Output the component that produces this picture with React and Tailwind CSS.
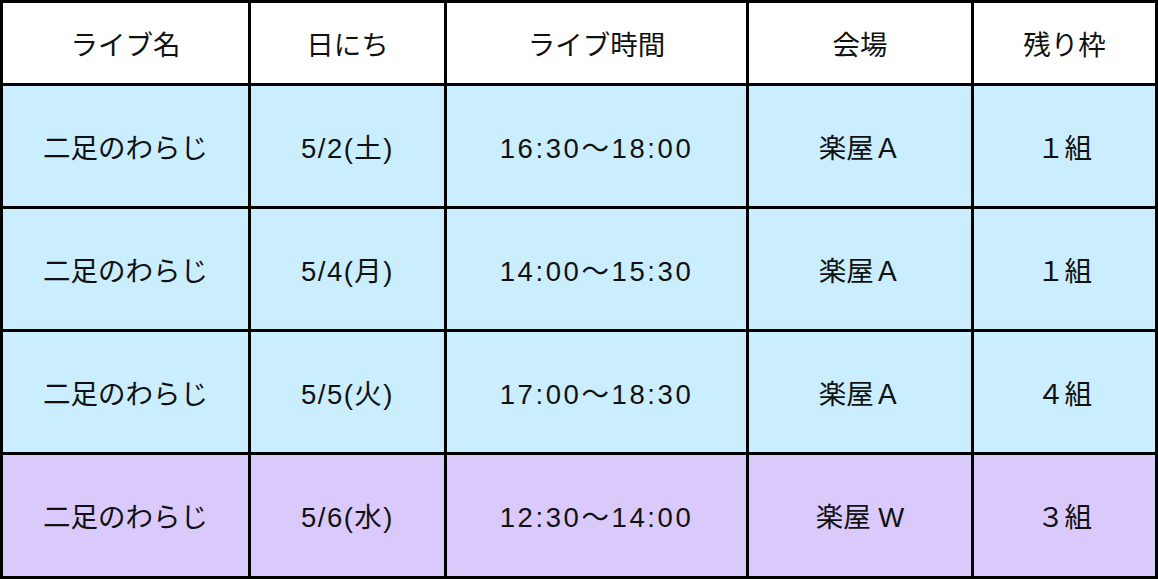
const headers = ['ライブ名', '日にち', 'ライブ時間', '会場', '残り枠'];

const rows = [
  { name: '二足のわらじ', date: '5/2(土)', time: '16:30〜18:00', place: '楽屋Ａ', left: '１組', bg: 'bg-[#caeefd]' },
  { name: '二足のわらじ', date: '5/4(月)', time: '14:00〜15:30', place: '楽屋Ａ', left: '１組', bg: 'bg-[#caeefd]' },
  { name: '二足のわらじ', date: '5/5(火)', time: '17:00〜18:30', place: '楽屋Ａ', left: '４組', bg: 'bg-[#caeefd]' },
  { name: '二足のわらじ', date: '5/6(水)', time: '12:30〜14:00', place: '楽屋 W', left: '３組', bg: 'bg-[#dacafc]' },
];

// extra tracking so the latin runs come out as wide as in the design
const track = ['', 'tracking-[1.5px]', 'tracking-[2.6px]', '', ''];

export default function App() {
  return (
    <div
      className="w-[1158px] h-[579px] bg-black p-[3px] grid grid-cols-[245px_193px_299px_222px_181px] grid-rows-[80px_120px_120px_120px_121px] gap-[3px] text-[27.5px] text-[#111]"
      style={{ fontFamily: '"Liberation Sans", "Noto Sans CJK JP", sans-serif' }}
    >
      {headers.map((h) => (
        <div key={h} className="bg-white flex items-center justify-center pt-[5px]">
          {h}
        </div>
      ))}
      {rows.map((r, i) =>
        [r.name, r.date, r.time, r.place, r.left].map((v, j) => (
          <div key={i + '-' + j} className={`${r.bg} ${track[j]} flex items-center justify-center pt-[5px]`}>
            {v}
          </div>
        ))
      )}
    </div>
  );
}
